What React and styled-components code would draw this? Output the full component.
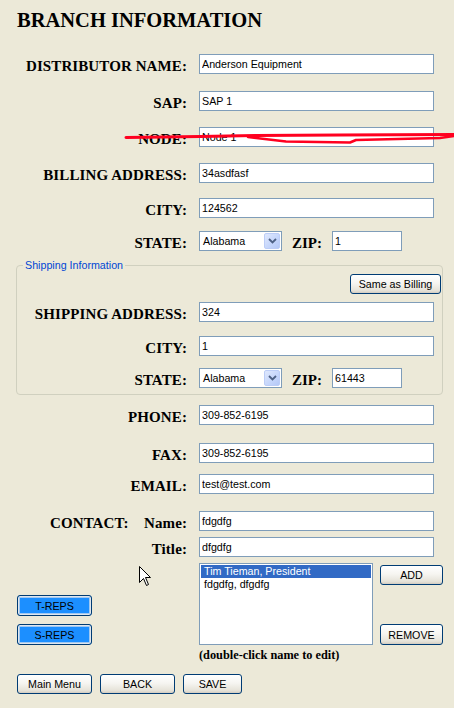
import React from "react";
import styled, { createGlobalStyle } from "styled-components";

const GlobalStyle = createGlobalStyle`
  html, body {
    margin: 0;
    padding: 0;
    background: #ece9d8;
  }
`;

const Page = styled.div`
  position: relative;
  width: 454px;
  height: 708px;
  box-sizing: border-box;
  padding-top: 9px;
  background: #ece9d8;
  font-family: "Liberation Sans", Arial, sans-serif;
  overflow: hidden;
`;

const Title = styled.h1`
  margin: 0 0 0 17px;
  font: bold 20.5px/23px "Liberation Serif", "Times New Roman", serif;
  color: #000;
`;

const Row = styled.div`
  display: flex;
  align-items: flex-end;
  margin-top: ${(p) => p.$mt || 0}px;
`;

const Label = styled.div`
  flex-shrink: 0;
  width: ${(p) => p.$w || 187}px;
  margin-right: 12px;
  text-align: right;
  font: bold 15px/15px "Liberation Serif", "Times New Roman", serif;
  letter-spacing: 0.1px;
  color: #000;
`;

const ContactLabel = styled(Label)`
  display: flex;
  justify-content: space-between;
  padding-left: 50px;
  box-sizing: border-box;
`;

const InlineLabel = styled.span`
  font: bold 15px/15px "Liberation Serif", "Times New Roman", serif;
  color: #000;
  margin: 0 10px;
`;

const TextInput = styled.input`
  width: ${(p) => p.$w || 235}px;
  height: 20px;
  box-sizing: border-box;
  margin: 0;
  padding: 0 2px;
  border: 1px solid #7f9db9;
  background: #fff;
  font: 10.7px "Liberation Sans", Arial, sans-serif;
  color: #000;
  outline: none;
`;

const SelectBox = styled.div`
  display: flex;
  width: 83px;
  height: 20px;
  box-sizing: border-box;
  padding: 1px;
  border: 1px solid #7f9db9;
  background: #fff;
`;

const SelectText = styled.span`
  flex: 1;
  padding-left: 2px;
  font: 10.7px/16px "Liberation Sans", Arial, sans-serif;
  color: #000;
`;

const ArrowBtn = styled.span`
  display: flex;
  align-items: center;
  justify-content: center;
  width: 16px;
  box-sizing: border-box;
  border: 1px solid #bccdf7;
  border-radius: 2px;
  background: linear-gradient(135deg, #dfe8fd 0%, #c4d5fb 60%, #b4c8f6 100%);
`;

const Fieldset = styled.fieldset`
  width: 427px;
  box-sizing: border-box;
  margin: 8px 0 0 16px;
  padding: 0 1px 6px 0;
  border: 1px solid #d0d0bf;
  border-radius: 4px;
`;

const Legend = styled.legend`
  margin-left: 6px;
  padding: 0 2px;
  font: 10.7px/12px "Liberation Sans", Arial, sans-serif;
  color: #0046d5;
`;

const RightBar = styled.div`
  display: flex;
  justify-content: flex-end;
  margin-top: 3px;
`;

const XpButton = styled.button`
  width: ${(p) => p.$w}px;
  height: ${(p) => p.$h || 20}px;
  box-sizing: border-box;
  margin: 0;
  padding: 0;
  border: 1px solid #003c74;
  border-radius: 3px;
  background: ${(p) =>
    p.$blue
      ? "#1c8fff"
      : "linear-gradient(180deg, #ffffff 0%, #f6f5f1 45%, #e6e3d9 85%, #d6d0c5 100%)"};
  box-shadow: ${(p) =>
    p.$blue
      ? "inset 0 0 0 1px #dfe6ee, inset 0 0 0 2px #9fc8f2"
      : "inset 0 -1px 0 #d6d0c5"};
  font: 10.7px "Liberation Sans", Arial, sans-serif;
  color: #000;
  cursor: default;
`;

const Bottom = styled.div`
  display: flex;
  align-items: flex-start;
  margin-top: 6px;
`;

const RepsCol = styled.div`
  display: flex;
  flex-direction: column;
  justify-content: flex-end;
  gap: 8px;
  width: 199px;
  height: 82px;
  box-sizing: border-box;
  padding-left: 17px;
`;

const ListCol = styled.div`
  width: 174px;
`;

const ListBox = styled.div`
  height: 82px;
  box-sizing: border-box;
  padding: 1px;
  border: 1px solid #7f9db9;
  background: #fff;
`;

const ListItem = styled.div`
  height: 13px;
  padding-left: 3px;
  font: 10.7px/13px "Liberation Sans", Arial, sans-serif;
  color: ${(p) => (p.$selected ? "#fff" : "#000")};
  background: ${(p) => (p.$selected ? "#316ac5" : "transparent")};
`;

const Hint = styled.div`
  margin-top: 3px;
  font: bold 12.3px/14px "Liberation Serif", "Times New Roman", serif;
  color: #000;
`;

const ActionCol = styled.div`
  display: flex;
  flex-direction: column;
  justify-content: space-between;
  height: 80px;
  margin: 2px 0 0 7px;
`;

const Footer = styled.div`
  display: flex;
  gap: 8px;
  margin-top: 12px;
  padding-left: 17px;
`;

const Scribble = styled.svg`
  position: absolute;
  left: 0;
  top: 0;
  pointer-events: none;
`;

const Cursor = styled.svg`
  position: absolute;
  left: 139px;
  top: 566px;
  pointer-events: none;
`;

const Field = ({ label, value, mt, labelW, w }) => (
  <Row $mt={mt}>
    <Label $w={labelW}>{label}</Label>
    <TextInput $w={w} defaultValue={value} />
  </Row>
);

const StateRow = ({ mt, labelW, zip }) => (
  <Row $mt={mt}>
    <Label $w={labelW}>STATE:</Label>
    <SelectBox>
      <SelectText>Alabama</SelectText>
      <ArrowBtn>
        <svg width="9" height="6" viewBox="0 0 9 6">
          <path d="M1 1 L4.5 4.5 L8 1" fill="none" stroke="#4d6185" strokeWidth="1.8" />
        </svg>
      </ArrowBtn>
    </SelectBox>
    <InlineLabel>ZIP:</InlineLabel>
    <TextInput $w={70} defaultValue={zip} />
  </Row>
);

export default function App() {
  return (
    <Page>
      <GlobalStyle />
      <Title>BRANCH INFORMATION</Title>

      <Field label="DISTRIBUTOR NAME:" value="Anderson Equipment" mt={22} />
      <Field label="SAP:" value="SAP 1" mt={17} />
      <Field label="NODE:" value="Node 1" mt={16} />
      <Field label="BILLING ADDRESS:" value="34asdfasf" mt={16} />
      <Field label="CITY:" value="124562" mt={15} />
      <StateRow mt={13} zip="1" />

      <Fieldset>
        <Legend>Shipping Information</Legend>
        <RightBar>
          <XpButton $w={91}>Same as Billing</XpButton>
        </RightBar>
        <Field label="SHIPPING ADDRESS:" value="324" mt={8} labelW={170} />
        <Field label="CITY:" value="1" mt={14} labelW={170} />
        <StateRow mt={12} labelW={170} zip="61443" />
      </Fieldset>

      <Field label="PHONE:" value="309-852-6195" mt={10} />
      <Field label="FAX:" value="309-852-6195" mt={18} />
      <Field label="EMAIL:" value="test@test.com" mt={11} />
      <Row $mt={17}>
        <ContactLabel>
          <span>CONTACT:</span>
          <span>Name:</span>
        </ContactLabel>
        <TextInput defaultValue="fdgdfg" />
      </Row>
      <Field label="Title:" value="dfgdfg" mt={6} />

      <Bottom>
        <RepsCol>
          <XpButton $w={75} $h={21} $blue>T-REPS</XpButton>
          <XpButton $w={75} $h={21} $blue>S-REPS</XpButton>
        </RepsCol>
        <ListCol>
          <ListBox>
            <ListItem $selected>Tim Tieman, President</ListItem>
            <ListItem>fdgdfg, dfgdfg</ListItem>
          </ListBox>
          <Hint>(double-click name to edit)</Hint>
        </ListCol>
        <ActionCol>
          <XpButton $w={63}>ADD</XpButton>
          <XpButton $w={63} $h={21}>REMOVE</XpButton>
        </ActionCol>
      </Bottom>

      <Footer>
        <XpButton $w={75}>Main Menu</XpButton>
        <XpButton $w={75}>BACK</XpButton>
        <XpButton $w={59}>SAVE</XpButton>
      </Footer>

      <Scribble width="454" height="708" viewBox="0 0 454 708">
        <path
          d="M126 137.5 L200 136.5 L255 135.5 L340 135 L454 134.5"
          fill="none"
          stroke="#ff0020"
          strokeWidth="3"
          strokeLinecap="round"
        />
        <path
          d="M248 137 L286 141.5 L350 142.5 L356 140 L440 138 L454 136"
          fill="none"
          stroke="#ff0020"
          strokeWidth="2.6"
          strokeLinecap="round"
          strokeLinejoin="round"
        />
      </Scribble>

      <Cursor width="13" height="21" viewBox="0 0 13 21">
        <path
          d="M0.5 0.5 L0.5 16.5 L4.5 12.5 L7.5 19.5 L9.5 18.5 L6.5 11.5 L11.5 11.5 Z"
          fill="#fff"
          stroke="#000"
          strokeWidth="1"
          strokeLinejoin="miter"
        />
      </Cursor>
    </Page>
  );
}
